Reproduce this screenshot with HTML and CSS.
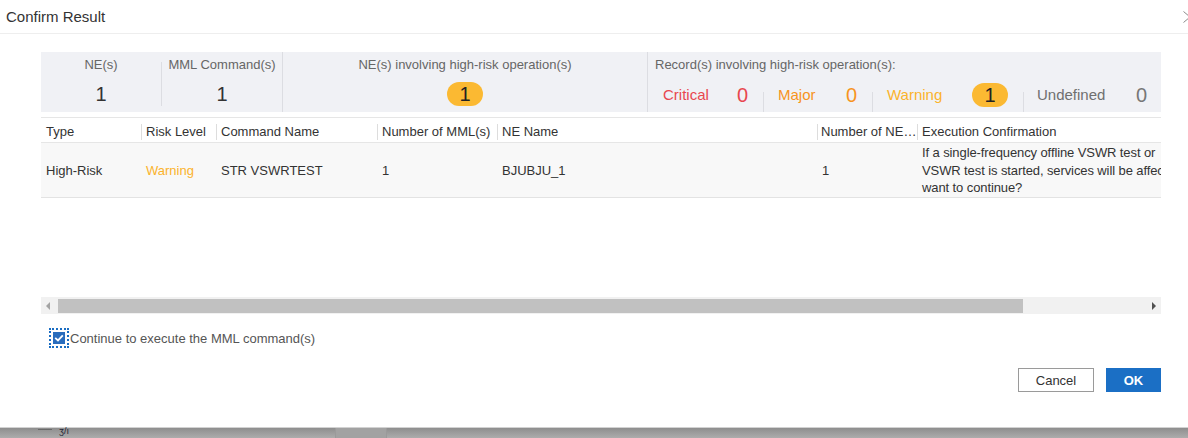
FILE: index.html
```html
<!DOCTYPE html>
<html lang="en">
<head>
<meta charset="utf-8">
<title>Confirm Result</title>
<link rel="stylesheet" href="styles.css">
</head>
<body>
<div class="dialog">
  <div class="titlebar">
    <span class="title">Confirm Result</span>
    <svg class="close" width="14" height="12" viewBox="0 0 14 12"><path d="M0.5 0.5 L13.5 11.5 M0.5 11.5 L13.5 0.5" stroke="#8a8a8a" stroke-width="1" fill="none"/></svg>
  </div>
  <div class="content">
    <div class="summary">
      <div class="cell c-ne">
        <div class="lbl">NE(s)</div>
        <div class="val">1</div>
      </div>
      <div class="minisep"></div>
      <div class="cell c-mml">
        <div class="lbl">MML Command(s)</div>
        <div class="val">1</div>
      </div>
      <div class="vsep"></div>
      <div class="cell c-risk">
        <div class="lbl">NE(s) involving high-risk operation(s)</div>
        <div class="badge">1</div>
      </div>
      <div class="vsep"></div>
      <div class="cell c-rec">
        <div class="lbl lbl-left">Record(s) involving high-risk operation(s):</div>
        <div class="rec-row">
          <span class="rl crit w-crit">Critical</span><span class="rv crit">0</span>
          <span class="rsep"></span>
          <span class="rl major w-major">Major</span><span class="rv major">0</span>
          <span class="rsep"></span>
          <span class="rl warn w-warn">Warning</span><span class="badge badge-sm">1</span>
          <span class="rsep rsep-w"></span>
          <span class="rl undef w-undef">Undefined</span><span class="rv undef">0</span>
        </div>
      </div>
    </div>

    <div class="grid-wrap">
      <table class="grid">
        <colgroup>
          <col class="col-type"><col class="col-risk"><col class="col-cmd"><col class="col-num"><col class="col-ne"><col class="col-nne"><col class="col-exec">
        </colgroup>
        <thead>
          <tr>
            <th><span class="th-in">Type</span></th>
            <th><span class="th-in sep">Risk Level</span></th>
            <th><span class="th-in sep">Command Name</span></th>
            <th><span class="th-in sep">Number of MML(s)</span></th>
            <th><span class="th-in sep">NE Name</span></th>
            <th><span class="th-in sep tight">Number of NE(s)</span></th>
            <th><span class="th-in sep">Execution Confirmation</span></th>
          </tr>
        </thead>
        <tbody>
          <tr>
            <td>High-Risk</td>
            <td class="warn">Warning</td>
            <td>STR VSWRTEST</td>
            <td>1</td>
            <td>BJUBJU_1</td>
            <td>1</td>
            <td class="exec">If a single-frequency offline VSWR test or<br>VSWR test is started, services will be affected. Do you<br>want to continue?</td>
          </tr>
        </tbody>
      </table>
    </div>

    <div class="hscroll">
      <div class="sb-btn"><span class="arr-left"></span></div>
      <div class="sb-track"><div class="sb-thumb"></div></div>
      <div class="sb-btn sb-btn-right"><span class="arr-right"></span></div>
    </div>

    <label class="check-row">
      <span class="cb-focus"><span class="cb-box"><svg width="10" height="8" viewBox="0 0 10 8"><path d="M1.2 3.8 L4 6.4 L8.8 1.4" stroke="#fff" stroke-width="1.8" fill="none"/></svg></span></span>
      <span class="cb-text">Continue to execute the MML command(s)</span>
    </label>

    <div class="actions">
      <button class="btn btn-cancel">Cancel</button>
      <button class="btn btn-ok">OK</button>
    </div>
  </div>
</div>
<div class="backdrop">
  <span class="bd-line"></span>
  <span class="bd-text">ʒ/ı</span>
  <span class="bd-block"></span>
</div>
</body>
</html>
```
FILE: styles.css
```css
html, body {
  margin: 0;
  padding: 0;
}
body {
  width: 1188px;
  height: 438px;
  overflow: hidden;
  background: #a8a8a8;
  font-family: "Liberation Sans", Arial, sans-serif;
  color: #333;
}
.dialog {
  box-sizing: border-box;
  height: 428px;
  background: #fff;
  border-bottom: 1px solid #d2d2d2;
}
.titlebar {
  box-sizing: border-box;
  height: 34px;
  border-bottom: 1px solid #eeeeee;
  display: flex;
  justify-content: space-between;
  align-items: flex-start;
  overflow: hidden;
}
.title {
  font-size: 15px;
  line-height: 33px;
  padding-left: 6px;
  color: #333;
}
.close {
  flex-shrink: 0;
  margin-top: 11px;
  margin-right: -9px;
}
.content {
  padding: 18px 27px 0 41px;
}

/* summary */
.summary {
  display: flex;
  height: 60px;
  background: #f0f1f5;
}
.cell {
  display: flex;
  flex-direction: column;
  align-items: center;
  padding-top: 5px;
  box-sizing: border-box;
}
.c-ne { width: 120px; }
.c-mml { width: 120px; }
.c-risk { width: 364px; }
.c-rec { width: 513px; align-items: flex-start; }
.lbl {
  font-size: 13px;
  line-height: 16px;
  color: #666;
  white-space: nowrap;
}
.lbl-left { padding-left: 7px; }
.val {
  margin-top: 8px;
  font-size: 20px;
  line-height: 26px;
  color: #333;
}
.minisep {
  width: 1px;
  height: 44px;
  margin-top: 10px;
  background: #dcdde2;
}
.vsep {
  width: 1px;
  background: #dcdde2;
}
.badge {
  margin-top: 9px;
  width: 36px;
  height: 24px;
  border-radius: 12px;
  background: #fbb932;
  color: #222;
  font-size: 20px;
  line-height: 24px;
  text-align: center;
}
.rec-row {
  display: flex;
  align-items: center;
  height: 34px;
  margin-top: 5px;
  padding-left: 15px;
}
.rl {
  font-size: 15px;
  line-height: 20px;
  white-space: nowrap;
}
.rv {
  font-size: 20px;
  line-height: 26px;
  width: 11px;
}
.w-crit { width: 74px; }
.w-major { width: 68px; }
.w-warn { width: 85px; }
.w-undef { width: 99px; }
.rsep {
  align-self: flex-end;
  width: 1px;
  height: 20px;
  background: #dcdde2;
  margin: 0 14px 0 15px;
}
.rec-row .badge-sm { margin-top: 0; }
.rsep-w { margin: 0 13px 0 15px; }
.crit { color: #e8474f; }
.major { color: #f7941e; }
.warn { color: #fbb32c; }
.undef { color: #6f6f6f; }
.rv.undef { color: #777; }

/* grid */
.grid-wrap {
  margin-top: 5px;
  height: 180px;
  overflow: hidden;
  border-top: 1px solid #e6e6e6;
  box-sizing: border-box;
}
.grid {
  table-layout: fixed;
  border-collapse: collapse;
  width: 1300px;
  font-size: 13px;
}
.col-type { width: 100px; }
.col-risk { width: 75px; }
.col-cmd { width: 161px; }
.col-num { width: 120px; }
.col-ne { width: 320px; }
.col-nne { width: 100px; }
.col-exec { width: 424px; }
.grid th {
  height: 24px;
  padding: 0;
  font-weight: normal;
  text-align: left;
  color: #333;
  border-bottom: 1px solid #e6e6e6;
  vertical-align: top;
}
.th-in {
  display: block;
  margin-top: 6px;
  padding: 0 4px 0 5px;
  line-height: 16px;
  white-space: nowrap;
  overflow: hidden;
  text-overflow: ellipsis;
}
.th-in.sep {
  border-left: 1px solid #dddddd;
  padding-left: 4px;
}
.th-in.tight { padding-left: 3px; padding-right: 0; }
.grid td {
  height: 53px;
  padding: 1px 4px 0 5px;
  background: #f8f8f8;
  border-bottom: 1px solid #e3e3e3;
  white-space: nowrap;
  vertical-align: middle;
  color: #333;
}
.grid td.warn { color: #fbb32c; }
.grid td.exec {
  padding-top: 0.5px;
  line-height: 17.5px;
  font-size: 13px;
  letter-spacing: -0.1px;
}

/* horizontal scrollbar */
.hscroll {
  display: flex;
  height: 17px;
  background: #f1f1f1;
}
.sb-btn {
  width: 17px;
  display: flex;
  align-items: center;
  justify-content: center;
}
.arr-left {
  width: 0;
  height: 0;
  border-top: 4px solid transparent;
  border-bottom: 4px solid transparent;
  border-right: 4px solid #a3a3a3;
  margin-left: -4px;
}
.arr-right {
  width: 0;
  height: 0;
  border-top: 4px solid transparent;
  border-bottom: 4px solid transparent;
  border-left: 4px solid #505050;
  margin-left: 2px;
}
.sb-track {
  flex: 1;
  display: flex;
  align-items: center;
}
.sb-thumb {
  width: 965px;
  height: 14px;
  background: #c1c1c1;
}

/* checkbox */
.check-row {
  display: flex;
  align-items: center;
  margin-top: 14px;
  margin-left: 8px;
}
.cb-focus {
  width: 16px;
  height: 16px;
  border: 2px dotted #1a6dc2;
  display: flex;
  align-items: center;
  justify-content: center;
}
.cb-box {
  width: 12px;
  height: 12px;
  background: #2a6dbd;
  display: flex;
  align-items: center;
  justify-content: center;
}
.cb-text {
  font-size: 13px;
  line-height: 18px;
  padding-top: 1px;
  color: #555;
  margin-left: 1px;
}

/* buttons */
.actions {
  display: flex;
  justify-content: flex-end;
  gap: 12px;
  margin-top: 20px;
}
.btn {
  box-sizing: border-box;
  height: 24px;
  font-family: "Liberation Sans", Arial, sans-serif;
  font-size: 13px;
  padding: 0;
  cursor: pointer;
}
.btn-cancel {
  width: 76px;
  background: #fff;
  color: #333;
  border: 1px solid #9a9a9a;
}
.btn-ok {
  width: 55px;
  background: #1b6fc5;
  color: #fff;
  border: none;
  font-weight: bold;
}

/* backdrop strip */
.backdrop {
  height: 10px;
  display: flex;
  align-items: flex-start;
  background: linear-gradient(#8e8e8e, #acacac);
}
.bd-line {
  width: 14px;
  height: 1px;
  background: #6a6a6a;
  margin: 1px 0 0 38px;
}
.bd-text {
  font-size: 9px;
  line-height: 6px;
  color: #223;
  margin-left: 7px;
}
.bd-block {
  width: 50px;
  height: 10px;
  margin-left: 266px;
  background: #a2a2a2;
  border-left: 1px solid #9a9a9a;
  border-right: 1px solid #9a9a9a;
}
```
